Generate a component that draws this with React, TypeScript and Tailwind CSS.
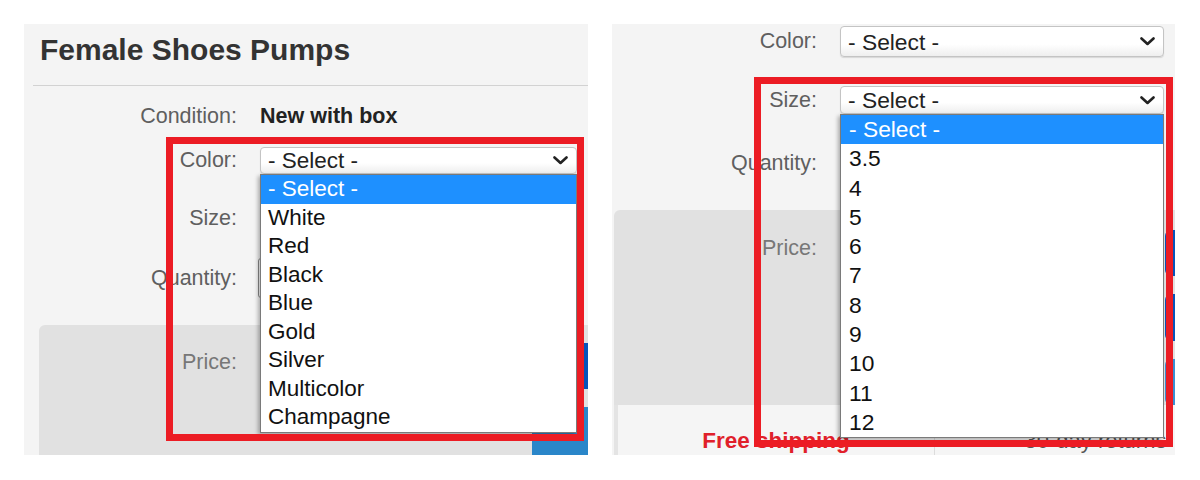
import React from "react";

const FONT = { fontFamily: '"Liberation Sans", Arial, sans-serif' };

function Chevron() {
  return (
    <svg width="15" height="9" viewBox="0 0 15 9" className="shrink-0">
      <polyline points="1.5,1.5 7.5,7 13.5,1.5" fill="none" stroke="#222" strokeWidth="2.6" strokeLinecap="round" strokeLinejoin="round" />
    </svg>
  );
}

function SelectBox({ cls, textCls, showText = true, children }: { cls: string; textCls: string; showText?: boolean; children?: React.ReactNode }) {
  return (
    <div className={"relative " + cls}>
      <div className="flex h-full w-full items-center justify-between rounded-[4px] border border-[#c4c4c4] bg-gradient-to-b from-white from-60% to-[#eeeeee] pl-[7px] pr-[8px] shadow-[0_1px_1px_rgba(0,0,0,0.12)]">
        <span className={"text-[#222] " + textCls}>{showText ? "- Select -" : ""}</span>
        <Chevron />
      </div>
      {children}
    </div>
  );
}

function DropList({ items, rowCls }: { items: string[]; rowCls: string }) {
  return (
    <div className="absolute left-0 top-full z-10 w-full border border-[#7a7a7a] bg-white shadow-[-2px_2px_4px_rgba(0,0,0,0.3)]">
      {items.map((it, i) => (
        <div
          key={it}
          className={
            rowCls + (i === 0 ? " bg-[#1e90ff] text-white" : " text-[#111]")
          }
        >
          {it}
        </div>
      ))}
    </div>
  );
}

function LeftPanel() {
  const label = "w-[213px] shrink-0 text-right text-[21.5px] text-[#5f5f5f]";
  return (
    <div className="relative h-[431px] w-[564px] shrink-0 overflow-hidden bg-[#f4f4f4]">
      <h1 className="pl-[16px] pt-[8px] text-[30px] font-bold leading-[36px] text-[#333]">Female Shoes Pumps</h1>
      <div className="ml-[9px] mt-[17px] h-px bg-[#d2d2d2]" />
      <div className="mt-[15px] flex h-[30px] items-center">
        <div className={label}>Condition:</div>
        <div className="ml-[23px] text-[21.5px] font-bold text-[#222]">New with box</div>
      </div>
      <div className="relative z-20 mt-[16px] flex h-[27px] items-center">
        <div className={label}>Color:</div>
        <SelectBox cls="ml-[23px] h-[27px] w-[317px]" textCls="text-[22.5px] leading-[25px]">
          <DropList
            items={["- Select -", "White", "Red", "Black", "Blue", "Gold", "Silver", "Multicolor", "Champagne"]}
            rowCls="h-[28.5px] pl-[7px] text-[22.5px] leading-[28.5px]"
          />
        </SelectBox>
      </div>
      <div className="mt-[30px] flex h-[28px] items-center">
        <div className={label}>Size:</div>
        <SelectBox cls="ml-[23px] h-[28px] w-[317px]" textCls="text-[22.5px] leading-[26px]" showText={false} />
      </div>
      <div className="mt-[26px] flex h-[40px] items-center">
        <div className={label}>Quantity:</div>
        <div className="ml-[21px] h-[40px] w-[80px] rounded-[3px] border border-[#8a8a8a] bg-white" />
      </div>
      <div className="ml-[15px] mt-[27px] flex h-[140px] overflow-hidden rounded-tl-[6px] bg-[#e1e1e1]">
        <div className="w-[198px] shrink-0 pt-[22px] text-right text-[21.5px] leading-[30px] text-[#777]">Price:</div>
        <div className="flex-1" />
        <div className="flex w-[56px] shrink-0 flex-col pt-[18px]">
          <div className="h-[47px] rounded-l-[6px] bg-[#0654ba]" />
          <div className="mt-[18px] h-[60px] rounded-l-[6px] bg-[#2a86c9]" />
        </div>
      </div>
      <div className="pointer-events-none absolute left-[142px] top-[113px] z-30 h-[304px] w-[418px] border-[7px] border-[#ec1c24]" />
    </div>
  );
}

function RightPanel() {
  const label = "w-[205px] shrink-0 text-right text-[21.5px] text-[#5f5f5f]";
  return (
    <div className="relative h-[431px] w-[563px] shrink-0 overflow-hidden bg-[#f4f4f4]">
      <div className="mt-[2px] flex h-[31px] items-center">
        <div className={label}>Color:</div>
        <SelectBox cls="ml-[23px] h-[31px] w-[324px]" textCls="text-[22.8px] leading-[28px]" />
      </div>
      <div className="relative z-20 mt-[29px] flex h-[28px] items-center">
        <div className={label}>Size:</div>
        <SelectBox cls="ml-[23px] h-[28px] w-[324px]" textCls="text-[22.8px] leading-[26px]">
          <DropList
            items={["- Select -", "3.5", "4", "5", "6", "7", "8", "9", "10", "11", "12"]}
            rowCls="h-[29.3px] pl-[8px] text-[22.8px] leading-[29.3px]"
          />
        </SelectBox>
      </div>
      <div className="mt-[29px] flex h-[40px] items-center">
        <div className={label}>Quantity:</div>
        <div className="ml-[23px] h-[40px] w-[80px] rounded-[3px] border border-[#6a6a6a] bg-white" />
      </div>
      <div className="ml-[2px] mt-[27px] flex h-[195px] overflow-hidden rounded-tl-[6px] bg-[#e1e1e1]">
        <div className="w-[203px] shrink-0 pt-[23px] text-right text-[21.5px] leading-[30px] text-[#777]">Price:</div>
        <div className="flex-1" />
        <div className="flex w-[10px] shrink-0 flex-col pt-[20px]">
          <div className="h-[47px] rounded-l-[6px] bg-[#0654ba]" />
          <div className="mt-[18px] h-[47px] rounded-l-[6px] bg-[#0654ba]" />
          <div className="mt-[18px] h-[47px] rounded-l-[6px] bg-[#3a8fd2]" />
        </div>
      </div>
      <div className="ml-[2px] flex h-[60px] border-l-[4px] border-[#e4e4e4] bg-[#f5f5f5]">
        <div className="w-[317px] shrink-0 border-r border-[#dcdcdc] pt-[21px] text-center text-[22.5px] font-bold leading-[30px] text-[#e0202a]">
          Free shipping
        </div>
        <div className="w-[321px] shrink-0 pt-[21px] text-center text-[22px] leading-[30px] text-[#555]">30-day returns</div>
      </div>
      <div className="pointer-events-none absolute left-[142px] top-[53px] z-30 h-[370px] w-[419px] border-[7px] border-[#ec1c24]" />
    </div>
  );
}

export default function App() {
  return (
    <div className="h-[480px] w-[1200px] bg-white pl-[24px] pt-[24px]" style={FONT}>
      <div className="flex gap-[24px]">
        <LeftPanel />
        <RightPanel />
      </div>
    </div>
  );
}
